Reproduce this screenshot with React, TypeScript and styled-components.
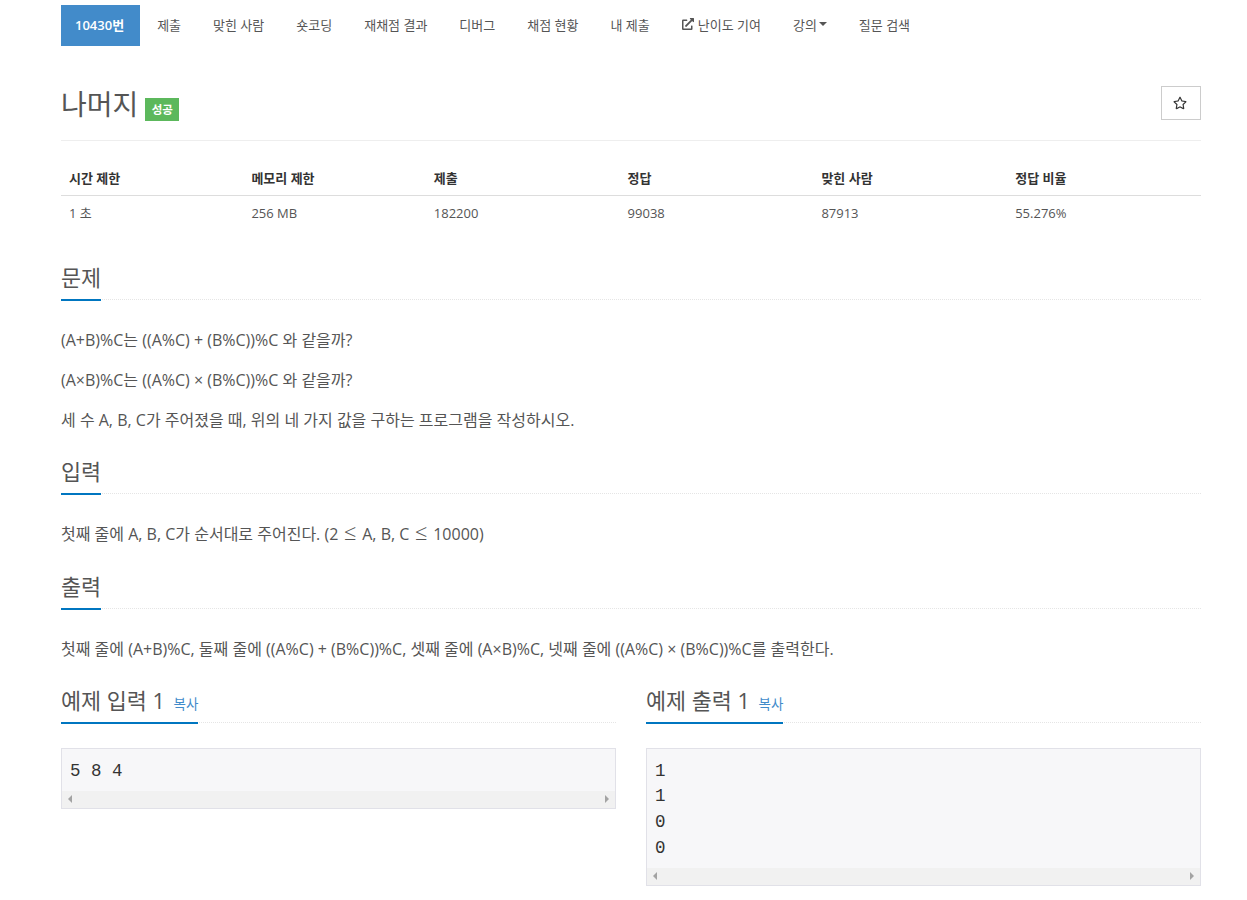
import React from "react";
import styled, { createGlobalStyle } from "styled-components";
import { FaRegStar, FaExternalLinkAlt } from "react-icons/fa";

const GlobalStyle = createGlobalStyle`
  html, body {
    margin: 0;
    padding: 0;
    background: #fff;
  }
  body {
    font-family: "Open Sans", "Noto Sans CJK KR", sans-serif;
    color: #555;
  }
`;

const Page = styled.div`
  width: 1140px;
  margin-left: 61px;
  padding-top: 5px;
  padding-bottom: 14px;
`;

const Nav = styled.nav`
  display: flex;
  height: 41px;
`;

const NavItem = styled.a<{ $active?: boolean; $gap?: number }>`
  display: flex;
  align-items: center;
  gap: ${(p) => p.$gap ?? 3}px;
  padding: 0 16px 3px ${(p) => (p.$active ? 14 : 16)}px;
  margin-right: ${(p) => (p.$active ? 1 : 0)}px;
  font-size: 13px;
  white-space: nowrap;
  color: ${(p) => (p.$active ? "#fff" : "#555")};
  background: ${(p) => (p.$active ? "#428bca" : "transparent")};
  font-weight: ${(p) => (p.$active ? 600 : 400)};
  svg {
    font-size: 12px;
  }
`;

const Caret = styled.span`
  width: 0;
  height: 0;
  margin-left: -1px;
  border-top: 4px solid #555;
  border-left: 4px solid transparent;
  border-right: 4px solid transparent;
`;

const TitleRow = styled.div`
  display: flex;
  align-items: flex-start;
  justify-content: space-between;
  height: 54px;
  padding-top: 40px;
  border-bottom: 1px solid #eee;
`;

const Title = styled.div`
  display: flex;
  align-items: flex-start;
  gap: 7px;
`;

const TitleText = styled.h1`
  margin: 0;
  font-size: 28px;
  line-height: 36px;
  font-weight: 400;
  color: #555;
`;

const Badge = styled.span`
  margin-top: 12px;
  padding: 0 6.5px;
  height: 23px;
  line-height: 23px;
  background: #5cb85c;
  color: #fff;
  font-size: 11.5px;
  font-weight: 700;
`;

const StarButton = styled.button`
  display: flex;
  align-items: center;
  justify-content: center;
  width: 40px;
  height: 34px;
  padding: 0 2px 0 0;
  background: #fff;
  border: 1px solid #ccc;
  color: #333;
  font-size: 14px;
`;

const Table = styled.table`
  width: 100%;
  margin-top: 19px;
  border-collapse: collapse;
  table-layout: fixed;
  font-size: 13px;
  th {
    height: 35px;
    padding: 0 8px;
    text-align: left;
    font-weight: 700;
    color: #333;
    border-bottom: 1px solid #ddd;
  }
  td {
    height: 33px;
    padding: 0 8px 2px;
    color: #555;
  }
`;

const Section = styled.section<{ $top: number }>`
  margin-top: ${(p) => p.$top}px;
`;

const Headline = styled.div`
  height: 37px;
  border-bottom: 1px dotted #e5e5e5;
`;

const HeadlineText = styled.h2`
  display: inline-flex;
  align-items: baseline;
  gap: 8.5px;
  margin: 0;
  height: 37px;
  border-bottom: 2px solid #0076c0;
  font-size: 21.8px;
  line-height: 31px;
  font-weight: 400;
  color: #555;
`;

const CopyLink = styled.a`
  font-size: 13.5px;
  color: #428bca;
`;

const Body = styled.p`
  margin: 0 0 20px;
  font-size: 16px;
  line-height: 20px;
  color: #555;
  &:first-of-type {
    margin-top: 30px;
  }
`;

const MathOp = styled.span`
  margin: 0 1.5px;
  font-size: 22px;
  font-weight: 300;
  line-height: 0;
`;

const Samples = styled.div`
  display: grid;
  grid-template-columns: 555px 555px;
  column-gap: 30px;
  align-items: start;
  margin-top: 26px;
`;

const Code = styled.div`
  margin-top: 25px;
  background: #f7f7f9;
  border: 1px solid #e1e1e8;
`;

const CodeText = styled.pre`
  margin: 0;
  padding: 9.5px 8px 6.3px;
  font-family: "Liberation Mono", monospace;
  font-size: 17.5px;
  line-height: 25.7px;
  color: #333;
`;

const ScrollBar = styled.div`
  display: flex;
  align-items: center;
  justify-content: space-between;
  height: 17px;
  padding: 0 6px;
  background: #f1f1f1;
`;

const Arrow = styled.span<{ $right?: boolean }>`
  width: 0;
  height: 0;
  border-top: 4px solid transparent;
  border-bottom: 4px solid transparent;
  border-left: ${(p) => (p.$right ? "4px solid #a3a3a3" : "none")};
  border-right: ${(p) => (p.$right ? "none" : "4px solid #a3a3a3")};
`;

const navLabels = ["제출", "맞힌 사람", "숏코딩", "재채점 결과", "디버그", "채점 현황", "내 제출"];

const Sample: React.FC<{ title: string; text: string }> = ({ title, text }) => (
  <div>
    <Headline>
      <HeadlineText>
        {title}
        <CopyLink>복사</CopyLink>
      </HeadlineText>
    </Headline>
    <Code>
      <CodeText>{text}</CodeText>
      <ScrollBar>
        <Arrow />
        <Arrow $right />
      </ScrollBar>
    </Code>
  </div>
);

export default function App() {
  return (
    <Page>
      <GlobalStyle />
      <Nav>
        <NavItem $active>10430번</NavItem>
        {navLabels.map((label) => (
          <NavItem key={label}>{label}</NavItem>
        ))}
        <NavItem $gap={4}>
          <FaExternalLinkAlt />
          난이도 기여
        </NavItem>
        <NavItem>
          강의
          <Caret />
        </NavItem>
        <NavItem>질문 검색</NavItem>
      </Nav>

      <TitleRow>
        <Title>
          <TitleText>나머지</TitleText>
          <Badge>성공</Badge>
        </Title>
        <StarButton>
          <FaRegStar />
        </StarButton>
      </TitleRow>

      <Table>
        <colgroup>
          <col style={{ width: "16%" }} />
          <col style={{ width: "16%" }} />
          <col style={{ width: "17%" }} />
          <col style={{ width: "17%" }} />
          <col style={{ width: "17%" }} />
          <col style={{ width: "17%" }} />
        </colgroup>
        <thead>
          <tr>
            <th>시간 제한</th>
            <th>메모리 제한</th>
            <th>제출</th>
            <th>정답</th>
            <th>맞힌 사람</th>
            <th>정답 비율</th>
          </tr>
        </thead>
        <tbody>
          <tr>
            <td>1 초</td>
            <td>256 MB</td>
            <td>182200</td>
            <td>99038</td>
            <td>87913</td>
            <td>55.276%</td>
          </tr>
        </tbody>
      </Table>

      <Section $top={31}>
        <Headline>
          <HeadlineText>문제</HeadlineText>
        </Headline>
        <Body>(A+B)%C는 ((A%C) + (B%C))%C 와 같을까?</Body>
        <Body>(A×B)%C는 ((A%C) × (B%C))%C 와 같을까?</Body>
        <Body>세 수 A, B, C가 주어졌을 때, 위의 네 가지 값을 구하는 프로그램을 작성하시오.</Body>
      </Section>

      <Section $top={26}>
        <Headline>
          <HeadlineText>입력</HeadlineText>
        </Headline>
        <Body>
          첫째 줄에 A, B, C가 순서대로 주어진다. (2 <MathOp>≤</MathOp> A, B, C <MathOp>≤</MathOp> 10000)
        </Body>
      </Section>

      <Section $top={27}>
        <Headline>
          <HeadlineText>출력</HeadlineText>
        </Headline>
        <Body>
          첫째 줄에 (A+B)%C, 둘째 줄에 ((A%C) + (B%C))%C, 셋째 줄에 (A×B)%C, 넷째 줄에 ((A%C) × (B%C))%C를 출력한다.
        </Body>
      </Section>

      <Samples>
        <Sample title="예제 입력 1" text="5 8 4" />
        <Sample title="예제 출력 1" text={"1\n1\n0\n0"} />
      </Samples>
    </Page>
  );
}
